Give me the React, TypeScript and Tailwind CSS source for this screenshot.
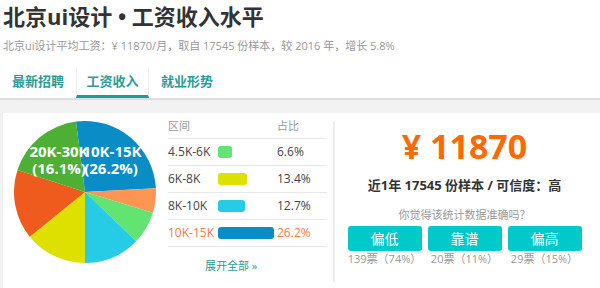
import React from "react";

const slices = [
  { from: -7.3, to: 87, color: "#0a8cc6" },
  { from: 87, to: 107, color: "#fe9552" },
  { from: 107, to: 134, color: "#62e372" },
  { from: 134, to: 180, color: "#26cbe5" },
  { from: 180, to: 231, color: "#dde000" },
  { from: 231, to: 288, color: "#ef5a1d" },
  { from: 288, to: 352.7, color: "#4daf33" },
];

const rows = [
  { range: "4.5K-6K", w: 14, color: "#62e372", pct: "6.6%" },
  { range: "6K-8K", w: 29, color: "#dde000", pct: "13.4%" },
  { range: "8K-10K", w: 27, color: "#26cbe5", pct: "12.7%" },
  { range: "10K-15K", w: 56, color: "#0a8cc6", pct: "26.2%", hot: true },
];

const votes = [
  { label: "偏低", count: "139票（74%）" },
  { label: "靠谱", count: "20票（11%）" },
  { label: "偏高", count: "29票（15%）" },
];

function pt(cx: number, cy: number, r: number, deg: number) {
  const a = ((deg - 90) * Math.PI) / 180;
  return [cx + r * Math.cos(a), cy + r * Math.sin(a)];
}

function Pie() {
  const c = 71;
  return (
    <svg width="142" height="142" viewBox="0 0 142 142">
      {slices.map((s, i) => {
        const [x1, y1] = pt(c, c, c, s.from);
        const [x2, y2] = pt(c, c, c, s.to);
        const large = s.to - s.from > 180 ? 1 : 0;
        return (
          <path
            key={i}
            d={`M${c},${c} L${x1},${y1} A${c},${c} 0 ${large} 1 ${x2},${y2} Z`}
            fill={s.color}
          />
        );
      })}
      <g fill="#fff" fontWeight="bold" fontSize="15" fontFamily="'Open Sans', sans-serif" textAnchor="middle">
        <text x="45" y="36">20K-30K</text>
        <text x="45" y="53">(16.1%)</text>
        <text x="98" y="36">10K-15K</text>
        <text x="97" y="53">(26.2%)</text>
      </g>
    </svg>
  );
}

export default function App() {
  return (
    <div className="w-[600px] h-[288px] overflow-hidden bg-white text-[#333] font-['Open_Sans','Noto_Sans_CJK_SC',sans-serif] flex flex-col">
      <div className="px-[3px] pt-[1px]">
        <h1 className="text-[22px] font-bold leading-[30px] text-[#333]">北京ui设计 • 工资收入水平</h1>
        <p className="text-[11px] leading-[18px] mt-[6px] text-[#999]">
          北京ui设计平均工资：¥ 11870/月，取自 17545 份样本，较 2016 年，增长 5.8%
        </p>
      </div>
      <div className="mt-[13px] flex h-[32px] border-b-2 border-[#ddd] text-[13px] font-bold text-[#2a9d97]">
        <div className="w-[76px] flex items-center justify-center pb-[3px]">最新招聘</div>
        <div className="w-[73px] flex items-center justify-center border-x border-[#eee] border-b-[3px] border-b-[#14a09a]">工资收入</div>
        <div className="w-[76px] flex items-center justify-center pb-[3px]">就业形势</div>
      </div>
      <div className="flex-1 bg-[#f2f2f2] pt-[13px] pl-[3px] flex">
        <div className="flex-1 bg-white flex">
          <div className="w-[330px] flex">
            <div className="pl-[11px] pt-[8px] w-[165px]">
              <Pie />
            </div>
            <div className="w-[159px]">
              <div className="h-[26px] pt-[2px] flex items-center border-b border-[#e8e8e8] text-[11px] text-[#999]">
                <span className="w-[109px]">区间</span>
                <span>占比</span>
              </div>
              {rows.map((r) => (
                <div
                  key={r.range}
                  className={`h-[27px] flex items-center border-b border-[#e8e8e8] text-[12px] ${r.hot ? "text-[#ff7a45]" : "text-[#444]"}`}
                >
                  <span className="w-[50px]">{r.range}</span>
                  <span className="w-[59px] flex">
                    <span className="h-[12px] rounded-[3px] block" style={{ width: r.w, background: r.color }} />
                  </span>
                  <span>{r.pct}</span>
                </div>
              ))}
              <div className="pl-[37px] pt-[11px] text-[11px] text-[#2a9d97]">展开全部 »</div>
            </div>
          </div>
          <div className="w-[2px] bg-[#eee] mt-[8px] mb-[6px]" />
          <div className="flex-1 flex flex-col items-center pr-[6px]">
            <div className="mt-[11px] text-[34px] leading-[44px] font-bold text-[#ff6a00]">¥ 11870</div>
            <div className="mt-[8px] text-[13px] font-bold leading-[18px] text-[#333]">近1年 17545 份样本 / 可信度：高</div>
            <div className="mt-[14px] text-[11px] leading-[14px] text-[#999]">你觉得该统计数据准确吗？</div>
            <div className="mt-[4px] flex gap-[6px]">
              {votes.map((v) => (
                <div key={v.label} className="w-[74px] flex flex-col items-center">
                  <div className="w-full h-[25px] rounded-[3px] bg-[#00c9c9] text-white text-[14px] flex items-center justify-center">
                    {v.label}
                  </div>
                  <div className="text-[11px] leading-[16px] text-[#999]">{v.count}</div>
                </div>
              ))}
            </div>
          </div>
        </div>
      </div>
    </div>
  );
}
